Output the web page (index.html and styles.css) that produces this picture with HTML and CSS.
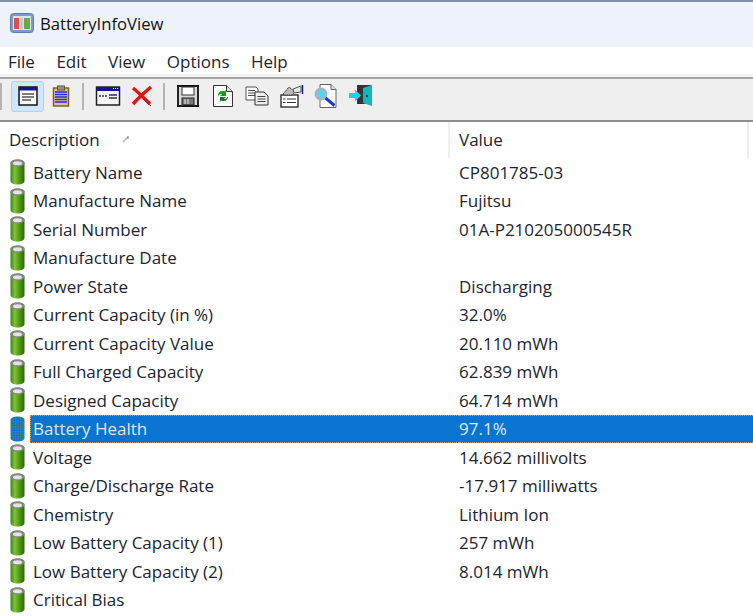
FILE: index.html
```html
<!DOCTYPE html>
<html lang="en">
<head>
<meta charset="utf-8">
<title>BatteryInfoView</title>
<link rel="stylesheet" href="styles.css">
</head>
<body>
<svg class="defs" width="0" height="0" aria-hidden="true">
  <defs>
    <linearGradient id="bat" x1="0" x2="1" y1="0" y2="0">
      <stop offset="0" stop-color="#3f7f18"/><stop offset=".3" stop-color="#80c434"/><stop offset=".55" stop-color="#5aa41c"/><stop offset="1" stop-color="#2c6410"/>
    </linearGradient>
    <pattern id="dots" width="2.5" height="2.5" patternUnits="userSpaceOnUse">
      <rect width="2.5" height="2.5" fill="#0a74d0"/><rect width="1.25" height="1.25" fill="#4f9a5a"/>
    </pattern>
    <symbol id="battery" viewBox="0 0 15 26">
      <path d="M.5 4c0-2.300 3-3.500 7-3.500s7 1.200 7 3.500v18c0 2.300-3 3.500-7 3.500s-7-1.200-7-3.500z" fill="url(#bat)"/>
      <path d="M.5 4c0-2.300 3-3.500 7-3.500s7 1.200 7 3.500-3 3.500-7 3.500S.5 6.300.5 4z" fill="#858585"/>
      <ellipse cx="7.500" cy="4.200" rx="4.500" ry="2" fill="#e4e4e4"/>
    </symbol>
    <symbol id="battery-sel" viewBox="0 0 15 26">
      <path d="M.5 4c0-2.300 3-3.500 7-3.500s7 1.200 7 3.500v18c0 2.300-3 3.500-7 3.500s-7-1.200-7-3.500z" fill="url(#dots)"/>
    </symbol>
  </defs>
</svg>

<header class="titlebar">
  <svg class="app-icon" viewBox="0 0 24 20">
    <rect x=".5" y=".5" width="23" height="19" rx="3" fill="#7e9cc4" stroke="#5d7ea8"/>
    <rect x="3" y="3" width="18" height="14" fill="#dfe3e8"/>
    <rect x="4" y="5" width="5" height="11" fill="#d8504f"/>
    <rect x="10" y="5" width="3" height="11" fill="#c9c9c9"/>
    <rect x="14" y="5" width="6" height="11" fill="#6aa84f"/>
  </svg>
  <span class="app-title">BatteryInfoView</span>
</header>

<nav class="menubar">
  <span class="menu-item">File</span>
  <span class="menu-item">Edit</span>
  <span class="menu-item">View</span>
  <span class="menu-item">Options</span>
  <span class="menu-item">Help</span>
</nav>

<div class="toolbar">
  <span class="sep first"></span>
  <span class="tool active">
    <svg viewBox="0 0 22 22"><rect x="2" y="2" width="18" height="18" fill="#fff" stroke="#111" stroke-width="1.500"/><rect x="2" y="2" width="18" height="3.500" fill="#14148c"/><path d="M5 9h12M5 12h12M5 15h9" stroke="#555" stroke-width="1.300"/></svg>
  </span>
  <span class="tool">
    <svg viewBox="0 0 22 22"><rect x="3.500" y="3" width="15" height="18" fill="#d8c890" stroke="#7a5a18" stroke-width="1.400"/><rect x="7.500" y="1" width="7" height="4" fill="#8fa070" stroke="#555"/><path d="M5 7h12M5 9.500h12M5 12h12M5 14.500h12M5 17h12" stroke="#2a2ae0" stroke-width="1.700"/></svg>
  </span>
  <span class="sep"></span>
  <span class="tool wide">
    <svg viewBox="0 0 26 22"><rect x="1.500" y="2" width="23" height="18" fill="#f4f4f4" stroke="#222" stroke-width="1.500"/><rect x="1.500" y="2" width="23" height="4" fill="#14148c"/><path d="M18 3.500h1M20 3.500h1M22 3.500h1" stroke="#fff"/><path d="M4 11h8" stroke="#666" stroke-width="2" stroke-dasharray="2 1"/><path d="M14 10h8M14 13h8" stroke="#333" stroke-width="1.300"/></svg>
  </span>
  <span class="tool narrow">
    <svg viewBox="0 0 22 22"><path d="M2 3c5 4 10 9 17 16" stroke="#e01414" stroke-width="3.500" fill="none"/><path d="M20 2C14 7 8 12 2 19" stroke="#e01414" stroke-width="3.500" fill="none"/><path d="M12 14l8 7" stroke="#444" stroke-width="1"/></svg>
  </span>
  <span class="sep last"></span>
  <span class="tool group">
    <svg viewBox="0 0 22 22"><path d="M1 1h20v20H1z" fill="#d8d8d8" stroke="#111" stroke-width="1.800"/><rect x="5" y="2" width="12" height="8" fill="#fff" stroke="#333"/><rect x="5" y="13" width="12" height="7" fill="#777" stroke="#222"/><path d="M8 14v5M11 14v5" stroke="#eee"/></svg>
  </span>
  <span class="tool group">
    <svg viewBox="0 0 22 22"><path d="M1.500.5h13l6 6v15h-19z" fill="#fff" stroke="#333"/><path d="M14.500.5v6h6" fill="#ddd" stroke="#333"/><path d="M6 10c0-3 3-5 7-3.500L14 5v6H8l2-1.800C8.500 8.500 7 9 7 11z" fill="#12a012"/><path d="M16 12c0 3-3 5-7 3.500L8 17v-5h6l-2 1.700c1.500.6 3 0 3-1.700z" fill="#0c7c1c"/></svg>
  </span>
  <span class="tool group">
    <svg class="big" viewBox="0 0 24 20"><path d="M1 1h10l2 2v11H1z" fill="#fff" stroke="#555"/><path d="M3 4.500h7M3 7h7M3 9.500h7" stroke="#555"/><path d="M10 6h9l4 4v9H10z" fill="#eee" stroke="#333"/><path d="M12.500 10.500h8M12.500 13h8M12.500 15.500h8" stroke="#444"/></svg>
  </span>
  <span class="tool group">
    <svg class="big" viewBox="0 0 24 24"><rect x="1" y="11" width="17" height="12" fill="#fff" stroke="#222" stroke-width="1.300"/><path d="M3 15h2.500M7 15h9M3 18.500h2.500M7 18.500h9" stroke="#333"/><path d="M3 10l6-7 6 5-3 3H4z" fill="#bbb" stroke="#333" stroke-dasharray="1.500 .6"/><path d="M13 5l8-3v6l-7 1z" fill="#e8e8e8" stroke="#555"/><path d="M22.500 1v9" stroke="#1a1aa0" stroke-width="1.500"/></svg>
  </span>
  <span class="tool group">
    <svg class="big" viewBox="0 0 24 24"><path d="M6 .5h11l5 5v18H6z" fill="#fff" stroke="#666"/><path d="M17 .5v5h5" fill="#ddd" stroke="#666"/><circle cx="7" cy="10" r="5.500" fill="#5fd0f0" stroke="#b0b0b0" stroke-width="1.800"/><path d="M11.500 14l9 7.500" stroke="#1a3ac8" stroke-width="3"/></svg>
  </span>
  <span class="tool group">
    <svg class="big" viewBox="0 0 24 24"><path d="M8 1h14v19H8z" fill="#333"/><path d="M14 4l9-3v21l-9-3z" fill="#14b8b8"/><circle cx="18" cy="12" r="1.200" fill="#044"/><path d="M0 9h6V5.500l6 6-6 6V14H0z" fill="#10d8e0"/></svg>
  </span>
</div>

<main class="list">
  <div class="list-head">
    <div class="col-head col-desc">Description<svg class="sort" viewBox="0 0 8 8"><path d="M1 7L6 2" stroke="#aaa" stroke-width="1.200"/><path d="M6 1v3" stroke="#777"/></svg></div>
    <div class="col-head col-value">Value</div>
    <div class="col-rest"></div>
  </div>
  <div class="row"><svg class="bat"><use href="#battery"/></svg><span class="d">Battery Name</span><span class="v">CP801785-03</span></div>
  <div class="row"><svg class="bat"><use href="#battery"/></svg><span class="d">Manufacture Name</span><span class="v">Fujitsu</span></div>
  <div class="row"><svg class="bat"><use href="#battery"/></svg><span class="d">Serial Number</span><span class="v">01A-P210205000545R</span></div>
  <div class="row"><svg class="bat"><use href="#battery"/></svg><span class="d">Manufacture Date</span><span class="v"></span></div>
  <div class="row"><svg class="bat"><use href="#battery"/></svg><span class="d">Power State</span><span class="v">Discharging</span></div>
  <div class="row"><svg class="bat"><use href="#battery"/></svg><span class="d">Current Capacity (in %)</span><span class="v">32.0%</span></div>
  <div class="row"><svg class="bat"><use href="#battery"/></svg><span class="d">Current Capacity Value</span><span class="v">20.110 mWh</span></div>
  <div class="row"><svg class="bat"><use href="#battery"/></svg><span class="d">Full Charged Capacity</span><span class="v">62.839 mWh</span></div>
  <div class="row"><svg class="bat"><use href="#battery"/></svg><span class="d">Designed Capacity</span><span class="v">64.714 mWh</span></div>
  <div class="row selected"><svg class="bat"><use href="#battery-sel"/></svg><span class="d">Battery Health</span><span class="v">97.1%</span></div>
  <div class="row"><svg class="bat"><use href="#battery"/></svg><span class="d">Voltage</span><span class="v">14.662 millivolts</span></div>
  <div class="row"><svg class="bat"><use href="#battery"/></svg><span class="d">Charge/Discharge Rate</span><span class="v">-17.917 milliwatts</span></div>
  <div class="row"><svg class="bat"><use href="#battery"/></svg><span class="d">Chemistry</span><span class="v">Lithium Ion</span></div>
  <div class="row"><svg class="bat"><use href="#battery"/></svg><span class="d">Low Battery Capacity (1)</span><span class="v">257 mWh</span></div>
  <div class="row"><svg class="bat"><use href="#battery"/></svg><span class="d">Low Battery Capacity (2)</span><span class="v">8.014 mWh</span></div>
  <div class="row"><svg class="bat"><use href="#battery"/></svg><span class="d">Critical Bias</span><span class="v"></span></div>
</main>
</body>
</html>
```
FILE: styles.css
```css
* { box-sizing: border-box; }
html, body { margin: 0; height: 100%; overflow: hidden; }
body {
  background: #fff;
  color: #1c2430;
  font-family: "Open Sans", "Noto Sans", sans-serif;
  font-size: 17px;
}
.defs { position: absolute; }
.titlebar {
  height: 47px;
  background: #eef2fb;
  border-top: 2px solid #7f93a6;
  display: flex;
  align-items: center;
  padding: 0 0 3px 10px;
  gap: 6px;
}
.app-icon { width: 24px; height: 20px; }
.app-title { color: #111; font-size: 16.700px; }
.menubar {
  height: 27px;
  background: #fff;
  display: flex;
  align-items: center;
  padding: 2px 0 0 8px;
  gap: 21.500px;
}
.toolbar {
  height: 48px;
  background: #efefef;
  border-top: 3px solid #f2f2f2;
  border-bottom: 2px solid #8e8e8e;
  box-shadow: inset 0 2px 0 #a6a6a6;
  display: flex;
  align-items: center;
  padding: 0 0 5px 0;
}
.sep { width: 2px; height: 27px; background: #b4b4b4; margin: 0 5px; flex: none; }
.sep.first { margin: 0 9px 0 0; }
.sep.last { margin: 0 6px; }
.tool {
  width: 33px;
  height: 31px;
  display: flex;
  align-items: center;
  justify-content: center;
  flex: none;
}
.tool svg { width: 22px; height: 22px; }
.tool svg.big { width: 24px; height: 24px; }
.tool.group { width: 34.500px; }
.tool.wide { width: 38px; }
.tool.wide svg { width: 26px; }
.tool.narrow { width: 30px; }
.tool.active { background: #cfe6fb; border: 1px solid #a8d4f8; border-radius: 3px; }
.list-head { display: flex; height: 36px; align-items: center; }
.col-head { height: 36px; display: flex; align-items: center; padding-bottom: 2px; }
.col-desc { width: 450px; padding-left: 9px; border-right: 2px solid #efefef; }
.col-value { width: 299px; padding-left: 9px; border-right: 2px solid #efefef; }
.col-rest { flex: 1; }
.sort { width: 8px; height: 8px; margin-left: 22px; }
.row {
  height: 28.500px;
  display: flex;
  align-items: center;
  padding-left: 9px;
}
.bat { width: 15px; height: 26px; flex: none; margin-left: 1px; }
.d { margin-left: 8px; width: 426px; flex: none; height: 100%; display: flex; align-items: center; }
.v { padding-left: 0; }
.selected { color: #dcedff; }
.selected .d {
  background: #0a74d0;
  border: dotted #c9a070;
  border-width: 1px 0 1px 1px;
  margin-left: 5px;
  padding-left: 2px;
  width: 429px;
}
.selected .v {
  background: #0a74d0;
  border: dotted #c9a070;
  border-width: 1px 0;
  flex: 1;
  height: 100%;
  display: flex;
  align-items: center;
}
```
